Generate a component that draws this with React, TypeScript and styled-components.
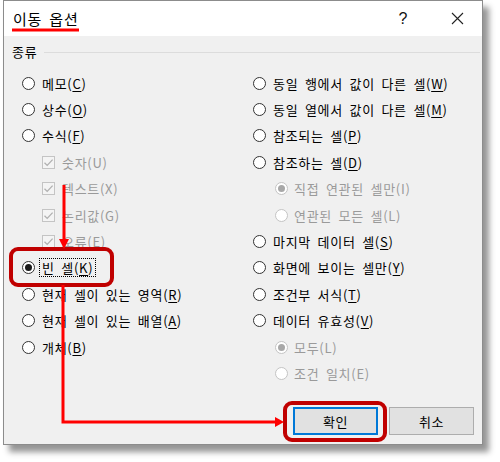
import React from 'react';
import styled, { createGlobalStyle } from 'styled-components';

const GlobalStyle = createGlobalStyle`
  html, body { margin: 0; padding: 0; background: #fff; }
  body { font-family: "Noto Sans CJK KR", "Noto Sans", sans-serif; }
`;

const Stage = styled.div`
  position: relative;
  width: 500px;
  height: 462px;
  padding-left: 3px;
  box-sizing: border-box;
  overflow: hidden;
`;

const Dialog = styled.div`
  width: 480px;
  height: 445px;
  box-sizing: border-box;
  border: 1px solid #8c8c8c;
  background: #f0f0f0;
  box-shadow: 6px 7px 6px rgba(0, 0, 0, 0.42);
  display: flex;
  flex-direction: column;
`;

const TitleBar = styled.div`
  height: 35px;
  flex: none;
  background: #fff;
  display: flex;
  align-items: center;
  padding-left: 9px;
`;

const Title = styled.div`
  font-size: 15px;
  line-height: 18px;
  letter-spacing: 0.8px;
  word-spacing: 3px;
  color: #000;
  flex: 1;
`;

const TitleButton = styled.div<{ w: number }>`
  width: ${p => p.w}px;
  height: 35px;
  display: flex;
  align-items: center;
  justify-content: center;
  font-family: "Liberation Sans", sans-serif;
  font-size: 16px;
  color: #111;
`;

const Body = styled.div`
  flex: 1;
  display: flex;
  flex-direction: column;
  padding: 8px 8px 9px 8px;
`;

const GroupHeader = styled.div`
  display: flex;
  align-items: center;
  gap: 7px;
  height: 16px;
  margin-right: -6px;
  font-size: 13px;
  line-height: 16px;
  letter-spacing: 0.7px;
  color: #000;
`;

const GroupLine = styled.div`
  flex: 1;
  height: 1px;
  background: #dcdcdc;
`;

const Columns = styled.div`
  display: grid;
  grid-template-columns: 241px 1fr;
  margin-top: 10px;
`;

const Column = styled.div<{ pad: number }>`
  display: flex;
  flex-direction: column;
  padding-left: ${p => p.pad}px;
`;

const Row = styled.div<{ indent?: number; gap?: number }>`
  height: 26.4px;
  display: flex;
  align-items: center;
  gap: ${p => p.gap ?? 7}px;
  padding-left: ${p => p.indent ?? 0}px;
`;

const Radio = styled.span<{ checked?: boolean; disabled?: boolean }>`
  width: 13px;
  height: 13px;
  box-sizing: border-box;
  border-radius: 50%;
  border: 1px solid ${p => (p.disabled ? '#c4c4c4' : '#333')};
  background: #fff;
  display: flex;
  align-items: center;
  justify-content: center;
  flex: none;
  &::after {
    content: '';
    display: ${p => (p.checked ? 'block' : 'none')};
    width: 7px;
    height: 7px;
    border-radius: 50%;
    background: ${p => (p.disabled ? '#a8a8a8' : '#1a1a1a')};
  }
`;

const Check = styled.span`
  width: 13px;
  height: 13px;
  box-sizing: border-box;
  border: 1px solid #c4c4c4;
  background: #f4f4f4;
  display: flex;
  align-items: center;
  justify-content: center;
  flex: none;
`;

const Label = styled.span<{ disabled?: boolean; focused?: boolean }>`
  font-size: 13px;
  line-height: 17px;
  letter-spacing: 0.7px;
  word-spacing: 3px;
  color: ${p => (p.disabled ? '#9a9a9a' : '#000')};
  white-space: nowrap;
  ${p =>
    p.focused &&
    `
    border: 1px dotted #000;
    padding: 0 2px;
    margin-left: -3px;
  `}
  u { text-underline-offset: 2px; }
`;

const ButtonRow = styled.div`
  margin-top: auto;
  display: flex;
  justify-content: flex-end;
  gap: 11px;
`;

const Button = styled.div<{ primary?: boolean }>`
  width: 85px;
  height: 28px;
  box-sizing: border-box;
  display: flex;
  align-items: center;
  justify-content: center;
  background: #e1e1e1;
  border: ${p => (p.primary ? '2px solid #0078d7' : '1px solid #adadad')};
  font-size: 13px;
  letter-spacing: 0.5px;
  color: #000;
`;

const Annotations = styled.svg`
  position: absolute;
  left: 0;
  top: 0;
  pointer-events: none;
`;

const CheckMark = () => (
  <svg width="11" height="11" viewBox="0 0 11 11">
    <path d="M1.5 5.8 L4.2 8.4 L9.6 2.6" fill="none" stroke="#b0b0b0" strokeWidth="1.3" />
  </svg>
);

const CloseIcon = () => (
  <svg width="13" height="13" viewBox="0 0 13 13">
    <path d="M1 1 L12 12 M12 1 L1 12" stroke="#222" strokeWidth="1.1" />
  </svg>
);

type Item = {
  kind: 'radio' | 'check' | 'sub';
  text: string;
  key: string;
  checked?: boolean;
  disabled?: boolean;
  focused?: boolean;
};

const leftItems: Item[] = [
  { kind: 'radio', text: '메모', key: 'C' },
  { kind: 'radio', text: '상수', key: 'O' },
  { kind: 'radio', text: '수식', key: 'F' },
  { kind: 'check', text: '숫자', key: 'U', disabled: true },
  { kind: 'check', text: '텍스트', key: 'X', disabled: true },
  { kind: 'check', text: '논리값', key: 'G', disabled: true },
  { kind: 'check', text: '오류', key: 'E', disabled: true },
  { kind: 'radio', text: '빈 셀', key: 'K', checked: true, focused: true },
  { kind: 'radio', text: '현재 셀이 있는 영역', key: 'R' },
  { kind: 'radio', text: '현재 셀이 있는 배열', key: 'A' },
  { kind: 'radio', text: '개체', key: 'B' },
];

const rightItems: Item[] = [
  { kind: 'radio', text: '동일 행에서 값이 다른 셀', key: 'W' },
  { kind: 'radio', text: '동일 열에서 값이 다른 셀', key: 'M' },
  { kind: 'radio', text: '참조되는 셀', key: 'P' },
  { kind: 'radio', text: '참조하는 셀', key: 'D' },
  { kind: 'sub', text: '직접 연관된 셀만', key: 'I', checked: true, disabled: true },
  { kind: 'sub', text: '연관된 모든 셀', key: 'L', disabled: true },
  { kind: 'radio', text: '마지막 데이터 셀', key: 'S' },
  { kind: 'radio', text: '화면에 보이는 셀만', key: 'Y' },
  { kind: 'radio', text: '조건부 서식', key: 'T' },
  { kind: 'radio', text: '데이터 유효성', key: 'V' },
  { kind: 'sub', text: '모두', key: 'L', checked: true, disabled: true },
  { kind: 'sub', text: '조건 일치', key: 'E', disabled: true },
];

function Option({ item }: { item: Item }) {
  const label = (
    <Label disabled={item.disabled} focused={item.focused}>
      {item.text}(
      {item.disabled ? item.key : <u>{item.key}</u>})
    </Label>
  );
  if (item.kind === 'check') {
    return (
      <Row indent={20}>
        <Check>
          <CheckMark />
        </Check>
        {label}
      </Row>
    );
  }
  if (item.kind === 'sub') {
    return (
      <Row indent={22} gap={6}>
        <Radio checked={item.checked} disabled />
        {label}
      </Row>
    );
  }
  return (
    <Row>
      <Radio checked={item.checked} />
      {label}
    </Row>
  );
}

export default function App() {
  return (
    <>
      <GlobalStyle />
      <Stage>
        <Dialog>
          <TitleBar>
            <Title>이동 옵션</Title>
            <TitleButton w={58}>?</TitleButton>
            <TitleButton w={50}>
              <CloseIcon />
            </TitleButton>
          </TitleBar>
          <Body>
            <GroupHeader>
              종류
              <GroupLine />
            </GroupHeader>
            <Columns>
              <Column pad={10}>
                {leftItems.map((it, i) => (
                  <Option key={i} item={it} />
                ))}
              </Column>
              <Column pad={0}>
                {rightItems.map((it, i) => (
                  <Option key={i} item={it} />
                ))}
              </Column>
            </Columns>
            <ButtonRow>
              <Button primary>확인</Button>
              <Button>취소</Button>
            </ButtonRow>
          </Body>
        </Dialog>
        <Annotations width="500" height="462" viewBox="0 0 500 462">
          <line x1="12" y1="30" x2="79" y2="30" stroke="#ff0000" strokeWidth="3" />
          <rect x="11" y="249" width="101" height="36" rx="7" fill="none" stroke="#c00000" strokeWidth="4" />
          <rect x="285" y="403" width="100" height="37" rx="7" fill="none" stroke="#c00000" strokeWidth="4" />
          <line x1="64" y1="185" x2="64" y2="241" stroke="#ff0000" strokeWidth="3" />
          <polygon points="59,239 69,239 64,249" fill="#ff0000" />
          <polyline points="63,285 63,422 276,422" fill="none" stroke="#ff0000" strokeWidth="3" />
          <polygon points="275,417 275,427 284,422" fill="#ff0000" />
        </Annotations>
      </Stage>
    </>
  );
}
